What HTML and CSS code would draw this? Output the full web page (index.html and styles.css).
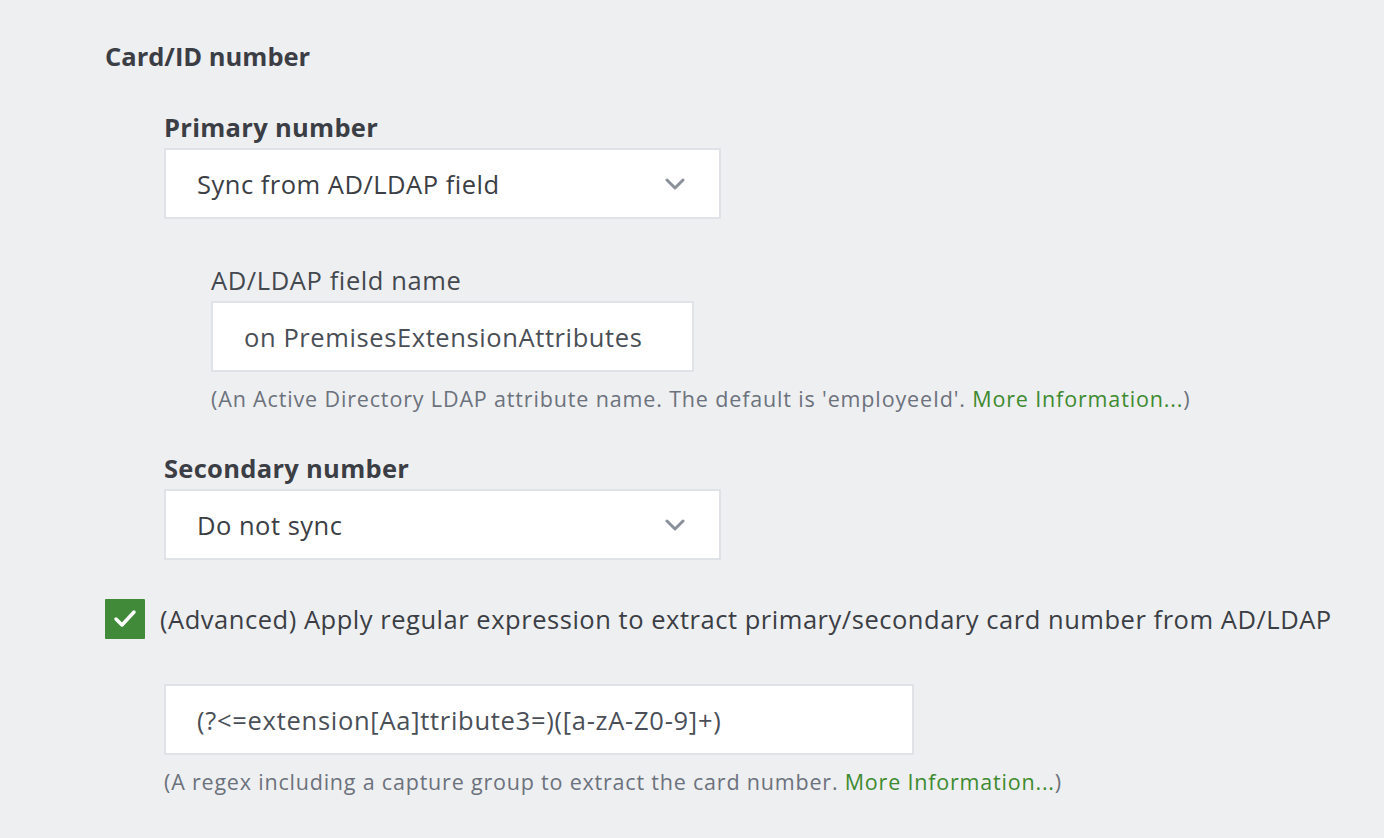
FILE: index.html
```html
<!DOCTYPE html>
<html>
<head>
<meta charset="utf-8">
<link rel="stylesheet" href="styles.css">
</head>
<body>
<div class="page">
  <h2 class="section-title">Card/ID number</h2>
  <div class="group">
    <div class="field">
      <div class="label bold">Primary number</div>
      <div class="select">
        <span>Sync from AD/LDAP field</span>
        <svg class="chev" width="20" height="12" viewBox="0 0 20 12"><path d="M2 2 L10 10 L18 2" fill="none" stroke="#8a9099" stroke-width="3" stroke-linecap="round" stroke-linejoin="round"/></svg>
      </div>
    </div>
    <div class="field sub">
      <div class="label">AD/LDAP field name</div>
      <div class="input w-ldap">on PremisesExtensionAttributes</div>
      <div class="help">(An Active Directory LDAP attribute name. The default is 'employeeId'. <span class="link">More Information...</span>)</div>
    </div>
    <div class="field">
      <div class="label bold">Secondary number</div>
      <div class="select">
        <span>Do not sync</span>
        <svg class="chev" width="20" height="12" viewBox="0 0 20 12"><path d="M2 2 L10 10 L18 2" fill="none" stroke="#8a9099" stroke-width="3" stroke-linecap="round" stroke-linejoin="round"/></svg>
      </div>
    </div>
  </div>
  <div class="check-row">
    <span class="checkbox"><svg width="24" height="20" viewBox="0 0 24 20"><path d="M3 10 L9 16 L21 3" fill="none" stroke="#fff" stroke-width="3.5" stroke-linecap="round" stroke-linejoin="round"/></svg></span>
    <span class="check-label">(Advanced) Apply regular expression to extract primary/secondary card number from AD/LDAP</span>
  </div>
  <div class="regex-block">
    <div class="input w-regex regex">(?&lt;=extension[Aa]ttribute3=)([a-zA-Z0-9]+)</div>
    <div class="help help-regex">(A regex including a capture group to extract the card number. <span class="link">More Information...</span>)</div>
  </div>
</div>
</body>
</html>
```

FILE: styles.css
```css
html, body {
  margin: 0;
  padding: 0;
  background: #eeeff1;
}
body {
  font-family: "Open Sans", "Liberation Sans", sans-serif;
  color: #3b3e44;
  width: 1384px;
  height: 838px;
  overflow: hidden;
}
.page {
  padding: 38px 0 0 105px;
}
.section-title {
  margin: 0;
  font-size: 25.5px;
  font-weight: 700;
  line-height: 36px;
  color: #3b3e44;
}
.group {
  padding-left: 59px;
  padding-top: 38px;
}
.field {
  display: flex;
  flex-direction: column;
  align-items: flex-start;
}
.label {
  font-size: 25.5px;
  line-height: 30px;
  margin-bottom: 6px;
  color: #44484f;
  letter-spacing: 0.6px;
}
.label.bold {
  font-weight: 700;
  color: #3b3e44;
  letter-spacing: 0.3px;
}
.select {
  box-sizing: border-box;
  width: 557px;
  height: 71px;
  background: #fff;
  border: 2px solid #dfe2e6;
  display: flex;
  align-items: center;
  justify-content: space-between;
  padding: 0 34px 0 31px;
  font-size: 25.5px;
  letter-spacing: 0.5px;
  color: #3b3e44;
}
.chev {
  display: block;
}
.field.sub {
  padding-left: 47px;
  padding-top: 46px;
  margin-bottom: 39px;
}
.input {
  box-sizing: border-box;
  height: 71px;
  background: #fff;
  border: 2px solid #dfe2e6;
  display: flex;
  align-items: center;
  padding-left: 31px;
  font-size: 25.5px;
  letter-spacing: 0.6px;
  color: #4a4f57;
}
.w-ldap {
  width: 483px;
}
.w-regex {
  width: 750px;
}
.regex {
  letter-spacing: 0.72px;
}
.help {
  font-size: 21.5px;
  line-height: 30px;
  margin-top: 12px;
  letter-spacing: 0.85px;
  color: #6c727c;
}
.help-regex {
  letter-spacing: 0.8px;
}
.link {
  color: #3d8a2f;
}
.check-row {
  display: flex;
  align-items: center;
  margin-top: 39px;
}
.checkbox {
  width: 40px;
  height: 40px;
  background: #418a3a;
  display: flex;
  align-items: center;
  justify-content: center;
  border-radius: 1px;
}
.check-label {
  margin-left: 15px;
  font-size: 25.5px;
  letter-spacing: 0.53px;
  color: #3b3e44;
}
.regex-block {
  padding-left: 59px;
  margin-top: 45px;
}
```
